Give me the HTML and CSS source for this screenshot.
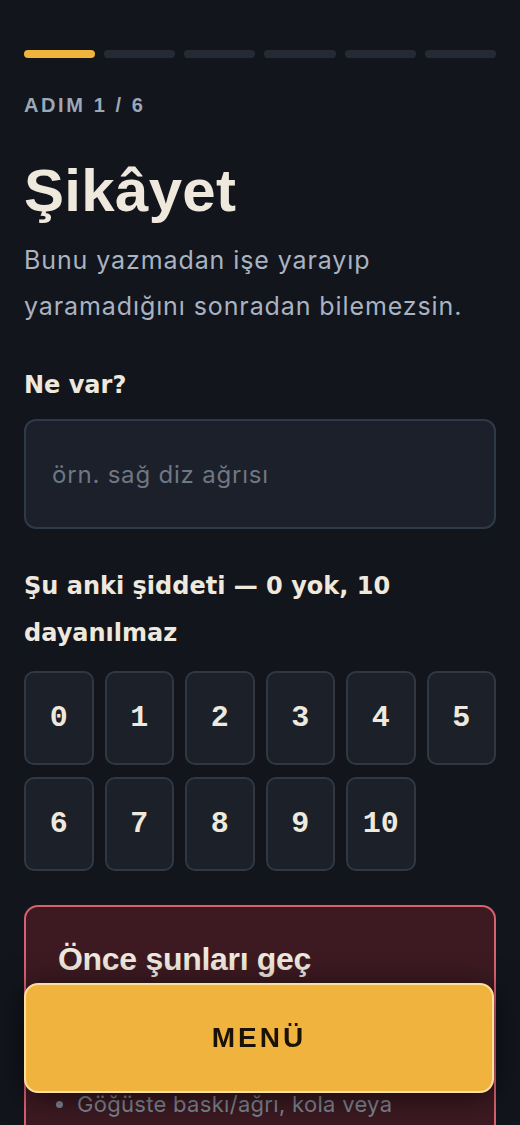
FILE: index.html
```html
<!DOCTYPE html>
<html lang="tr">
<head>
  <meta charset="UTF-8" />
  <meta name="viewport" content="width=device-width, initial-scale=1.0"/>
  <title>Şikâyet</title>
  <link rel="stylesheet" href="styles.css">
</head>
<body>
  <div class="page">
    <div class="progress">
      <span class="seg active"></span>
      <span class="seg"></span>
      <span class="seg"></span>
      <span class="seg"></span>
      <span class="seg"></span>
      <span class="seg"></span>
    </div>

    <div class="step">ADIM 1 / 6</div>
    <h1>Şikâyet</h1>
    <p class="lead">Bunu yazmadan işe yarayıp yaramadığını sonradan bilemezsin.</p>

    <label for="complaint">Ne var?</label>
    <input type="text" id="complaint" placeholder="örn. sağ diz ağrısı" />

    <div class="label">Şu anki şiddeti — 0 yok, 10 dayanılmaz</div>
    <div class="scale">
      <button>0</button>
      <button>1</button>
      <button>2</button>
      <button>3</button>
      <button>4</button>
      <button>5</button>
      <button>6</button>
      <button>7</button>
      <button>8</button>
      <button>9</button>
      <button>10</button>
    </div>

    <div class="warn">
      <h3>Önce şunları geç</h3>
      <p class="warn-text">Biri varsa bu uygulamayı kapat, doğrudan acile git.</p>
      <ul>
        <li>Göğüste baskı/ağrı, kola veya çeneye yayılan</li>
        <li>Ani güç kaybı, konuşma bozukluğu</li>
        <li>Yüksek ateşle birlikte ense sertliği</li>
      </ul>
    </div>
  </div>

  <button class="menu">MENÜ</button>
</body>
</html>
```

FILE: styles.css
```css
body {
  margin: 0;
  background: #12151c;
  color: #efe8dc;
  font-family: Inter, "Noto Sans", Arial, sans-serif;
}
.page {
  padding: 50px 24px 160px;
}
.progress {
  display: grid;
  grid-template-columns: repeat(6, 1fr);
  gap: 9px;
}
.seg {
  height: 8px;
  border-radius: 4px;
  background: #252b35;
}
.seg.active {
  background: #f0b43c;
}
.step {
  margin-top: 35px;
  font-family: "Liberation Sans", Arial, sans-serif;
  font-weight: bold;
  font-size: 20px;
  line-height: 24px;
  letter-spacing: 2.6px;
  color: #9aa8b8;
}
h1 {
  margin: 42px 0 0;
  font-family: "Liberation Sans", Arial, sans-serif;
  font-weight: bold;
  font-size: 60px;
  line-height: 64px;
  letter-spacing: 0.3px;
}
.lead {
  margin: 14px 0 0;
  font-size: 25px;
  line-height: 46px;
  letter-spacing: 0.9px;
  color: #a9b3c1;
}
label, .label {
  display: block;
  font-family: "DejaVu Sans", Arial, sans-serif;
  font-weight: bold;
  font-size: 24px;
}
label {
  margin-top: 41px;
  line-height: 30px;
}
input {
  display: block;
  box-sizing: border-box;
  width: 100%;
  height: 110px;
  margin-top: 19px;
  padding: 0 26px;
  background: #1b202a;
  border: 2px solid #2e3a47;
  border-radius: 12px;
  color: #efe8dc;
  font-family: Inter, "Noto Sans", Arial, sans-serif;
  font-size: 24px;
  letter-spacing: 0.8px;
  outline: none;
}
input::placeholder {
  color: #6f7782;
}
.label {
  margin-top: 34px;
  line-height: 47px;
}
.scale {
  display: grid;
  grid-template-columns: repeat(6, 1fr);
  gap: 12px 11px;
  margin-top: 14px;
}
.scale button {
  height: 94px;
  padding: 0;
  background: #1b2029;
  border: 2px solid #2f3843;
  border-radius: 10px;
  color: #efe8dc;
  font-family: "Liberation Mono", monospace;
  font-weight: bold;
  font-size: 30px;
  cursor: pointer;
}
.warn {
  margin-top: 34px;
  padding: 32px 32px 40px;
  background: #3d1a22;
  border: 2px solid #d9606e;
  border-radius: 14px;
}
.warn h3 {
  margin: 0;
  font-family: "Liberation Sans", Arial, sans-serif;
  font-size: 32px;
  letter-spacing: -0.3px;
  line-height: 40px;
}
.warn-text {
  margin: 12px 0 0;
  font-size: 22px;
  line-height: 36px;
  color: #c9b9bd;
}
.warn ul {
  margin: 23px 0 0;
  padding-left: 19px;
  font-size: 22px;
  line-height: 36px;
  letter-spacing: 0.3px;
  color: #7f8793;
}
.menu {
  position: fixed;
  left: 24px;
  right: 26px;
  bottom: 32px;
  height: 110px;
  background: #f0b43e;
  border: 2px solid #f9e0a0;
  border-radius: 14px;
  box-shadow: 0 4px 30px rgba(0,0,0,0.6);
  color: #1a1206;
  font-family: "Liberation Sans", Arial, sans-serif;
  font-weight: bold;
  font-size: 28px;
  letter-spacing: 3px;
  cursor: pointer;
}
```
